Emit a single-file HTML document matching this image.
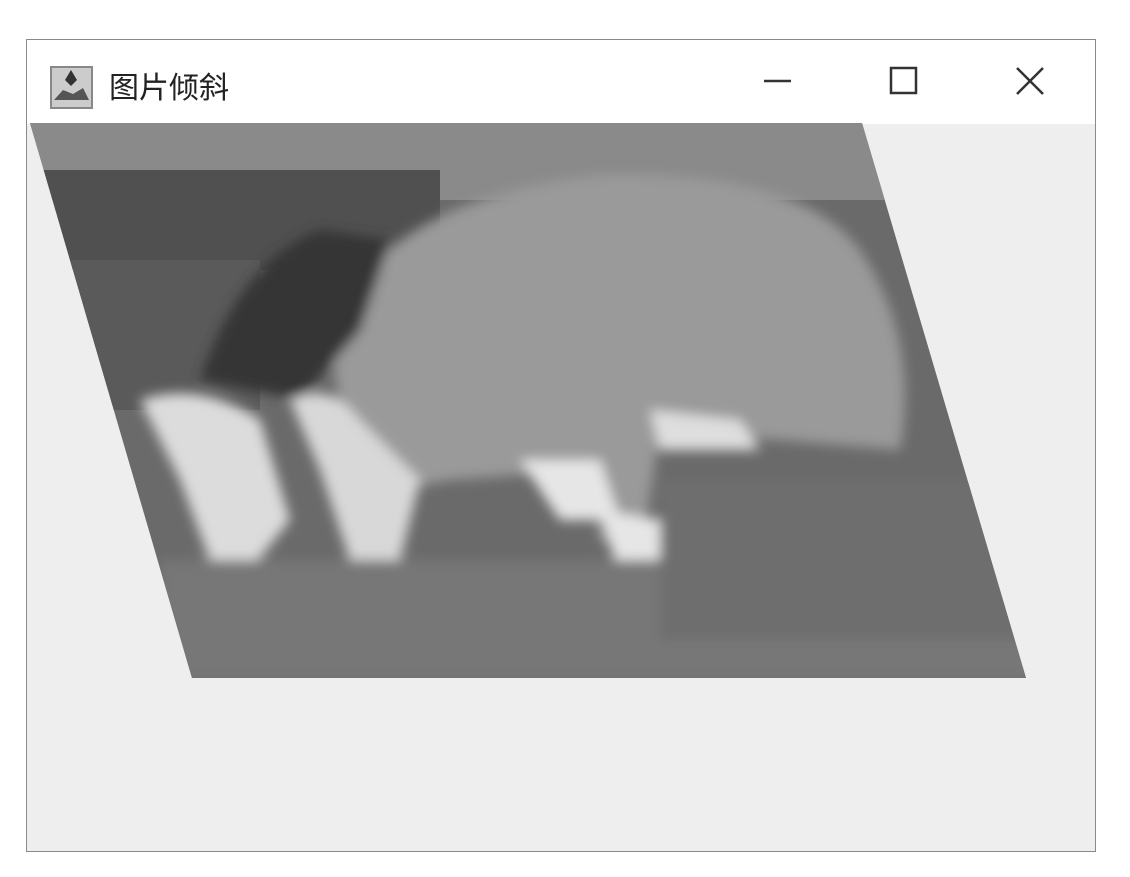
<!DOCTYPE html>
<html><head><meta charset="utf-8"><style>
html,body{margin:0;padding:0;background:#fff;width:1130px;height:877px;overflow:hidden}
.win{position:absolute;left:26px;top:39px;width:1068px;height:811px;border:1px solid #8a8a8a;background:#eeeeee}
.title{position:absolute;left:0;top:0;width:1068px;height:84px;background:#fff}
.t{position:absolute;left:82px;top:23px;font:30px "Liberation Sans","Noto Sans CJK SC",sans-serif;color:#222}
</style></head><body>
<div class="win"><div class="title">
<svg width="1068" height="84" style="position:absolute;left:0;top:0">
<rect x="24" y="27" width="41" height="41" fill="#ccc" stroke="#888" stroke-width="2"/>
<path d="M27 60 L36 50 L46 54 L56 48 L62 60 Z" fill="#555"/>
<path d="M44 30 L50 40 L44 46 L38 40 Z" fill="#333"/>
<line x1="737" y1="41" x2="764" y2="41" stroke="#333" stroke-width="2.5"/>
<rect x="864" y="28" width="25" height="25" fill="none" stroke="#333" stroke-width="2.5"/>
<path d="M990 28 L1016 54 M1016 28 L990 54" stroke="#333" stroke-width="2.5"/>
</svg>
<div class="t">图片倾斜</div>
</div></div>
<svg width="1130" height="877" style="position:absolute;left:0;top:0">
<defs><clipPath id="c"><path d="M30 123 L862 123 L1026 678 L192 678 Z"/></clipPath>
<filter id="b"><feGaussianBlur stdDeviation="6"/></filter></defs>
<g clip-path="url(#c)">
<rect x="0" y="120" width="1130" height="560" fill="#6a6a6a"/>
<rect x="0" y="120" width="1130" height="80" fill="#8a8a8a"/>
<rect x="40" y="170" width="400" height="100" fill="#505050"/>
<rect x="60" y="260" width="200" height="150" fill="#5a5a5a"/>
<g filter="url(#b)">
<path d="M330 330 Q380 200 600 175 Q800 170 860 250 Q920 340 900 450 L660 430 L640 560 L600 540 L590 470 L450 480 L350 500 Z" fill="#9a9a9a"/>
<path d="M200 380 Q240 260 320 230 L390 240 L360 330 L300 400 Z" fill="#353535"/>
<path d="M140 400 Q200 380 260 420 L290 520 L250 570 L210 560 L180 480 Z" fill="#dcdcdc"/>
<path d="M290 400 Q330 380 360 420 L420 480 L400 560 L350 560 L320 470 Z" fill="#d8d8d8"/>
<path d="M520 460 L600 460 L620 520 L560 520 Z" fill="#e6e6e6"/>
<path d="M600 510 L660 520 L680 610 L630 610 Z" fill="#e6e6e6"/>
<path d="M650 410 L740 420 L760 450 L660 450 Z" fill="#dedede"/>
<rect x="160" y="560" width="900" height="120" fill="#777"/>
<rect x="660" y="480" width="380" height="160" fill="#6e6e6e"/>
</g>
</g>
</svg>
</body></html>
